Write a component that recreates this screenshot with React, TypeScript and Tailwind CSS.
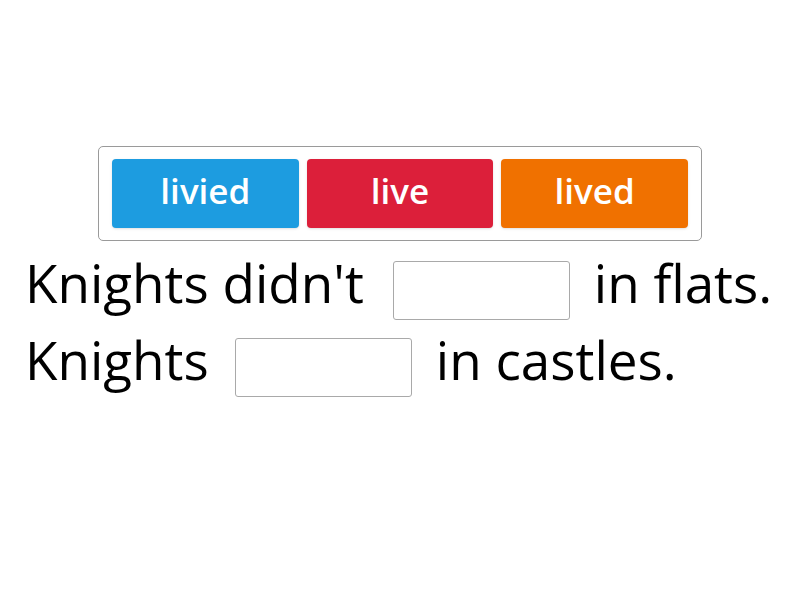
import React from 'react';

const words = [
  { label: 'livied', color: 'bg-[#1d9ce0]' },
  { label: 'live', color: 'bg-[#dc1f3a]' },
  { label: 'lived', color: 'bg-[#f07100]' },
];

const Blank = ({ first }: { first?: boolean }) => (
  <span
    className={`inline-block w-[177px] h-[59px] mt-[17px] border border-[#a9a9a9] rounded-[3px] bg-white mr-[24px] ${
      first ? 'ml-[29px]' : 'ml-[26px]'
    }`}
  />
);

export default function App() {
  return (
    <div className="w-[800px] h-[600px] bg-white font-['Open_Sans',sans-serif] text-black">
      <div className="pt-[146px] pl-[98px]">
        <div className="w-[604px] h-[95px] border border-[#9a9a9a] rounded-[5px] px-[13px] pt-[12px] flex gap-[8px]">
          {words.map((w) => (
            <div
              key={w.label}
              className={`${w.color} w-[187px] h-[69px] rounded-[4px] shadow-sm flex items-center justify-center text-white text-[35px] font-semibold pb-[4px]`}
            >
              {w.label}
            </div>
          ))}
        </div>
      </div>
      <div className="pl-[25px] pt-[3px] text-[53px] leading-[77px]">
        <div className="flex items-start">
          <span>Knights didn't</span>
          <Blank first />
          <span>in flats.</span>
        </div>
        <div className="flex items-start">
          <span>Knights</span>
          <Blank />
          <span>in castles.</span>
        </div>
      </div>
    </div>
  );
}
